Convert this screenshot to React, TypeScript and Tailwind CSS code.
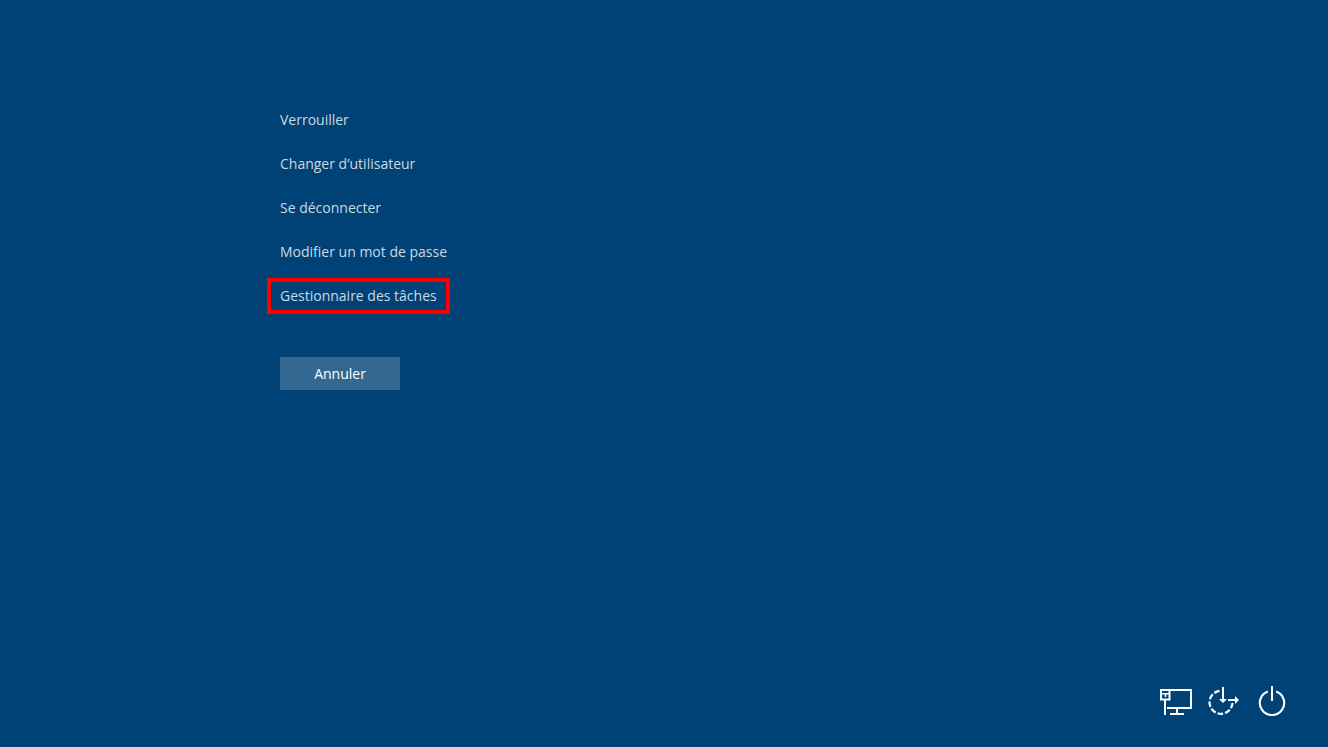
import type { ReactNode } from 'react';
import { clsx } from 'clsx';

interface MenuItem {
  label: string;
  highlighted?: boolean;
}

const MENU_ITEMS: MenuItem[] = [
  { label: 'Verrouiller' },
  { label: 'Changer d’utilisateur' },
  { label: 'Se déconnecter' },
  { label: 'Modifier un mot de passe' },
  { label: 'Gestionnaire des tâches', highlighted: true },
];

function NetworkIcon() {
  return (
    <svg viewBox="0 0 48 48" className="size-12" fill="none" stroke="currentColor" strokeWidth="2" aria-hidden="true">
      <path d="M18 12H39V30H15" />
      <path d="M9 12H17.5V21.5H9Z" />
      <path d="M10 15.8H17M13.5 15V19" strokeWidth="1.6" />
      <path d="M13 21V37" />
      <path d="M25 30V36M18 36H32" />
    </svg>
  );
}

function AccessibilityIcon() {
  return (
    <svg viewBox="0 0 48 48" className="size-12" fill="none" stroke="currentColor" strokeWidth="2" aria-hidden="true">
      <path d="M19.5 12.9A11.5 11.5 0 1 0 32.5 25" strokeWidth="2.2" strokeDasharray="5.7 2" />
      <path d="M23 9V23" />
      <path d="M19 21H27L23 25Z" fill="currentColor" stroke="none" />
      <path d="M28 22H37" />
      <path d="M35 18V26L39 22Z" fill="currentColor" stroke="none" />
    </svg>
  );
}

function PowerIcon() {
  return (
    <svg viewBox="0 0 48 48" className="size-12" fill="none" stroke="currentColor" strokeWidth="2" aria-hidden="true">
      <path d="M19.8 13.4A12.2 12.2 0 1 0 28.2 13.4" strokeWidth="2.1" />
      <path d="M24 8V23" />
    </svg>
  );
}

const ACTIONS: { label: string; icon: ReactNode }[] = [
  { label: 'Réseau', icon: <NetworkIcon /> },
  { label: 'Options d’ergonomie', icon: <AccessibilityIcon /> },
  { label: 'Marche/Arrêt', icon: <PowerIcon /> },
];

export default function App() {
  return (
    <div className="flex min-h-screen flex-col justify-between bg-[#004275] font-['Open_Sans','Noto_Sans',sans-serif] text-sm">
      <main className="pt-[102px] pl-[267px]">
        <ul className="flex flex-col items-start gap-2">
          {MENU_ITEMS.map((item) => (
            <li key={item.label}>
              <button
                type="button"
                className={clsx(
                  'flex h-9 items-center border-4 px-[9px] whitespace-nowrap text-[#ccd9e3] hover:text-white',
                  item.highlighted ? 'border-[#ff0000]' : 'border-transparent'
                )}
              >
                {item.label}
              </button>
            </li>
          ))}
        </ul>
        <button type="button" className="mt-[43px] ml-[13px] h-[33px] w-[120px] bg-[#336891] text-white">
          Annuler
        </button>
      </main>

      <footer className="flex justify-end pr-8 pb-[21px]">
        {ACTIONS.map((action) => (
          <button key={action.label} type="button" aria-label={action.label} className="text-white">
            {action.icon}
          </button>
        ))}
      </footer>
    </div>
  );
}
